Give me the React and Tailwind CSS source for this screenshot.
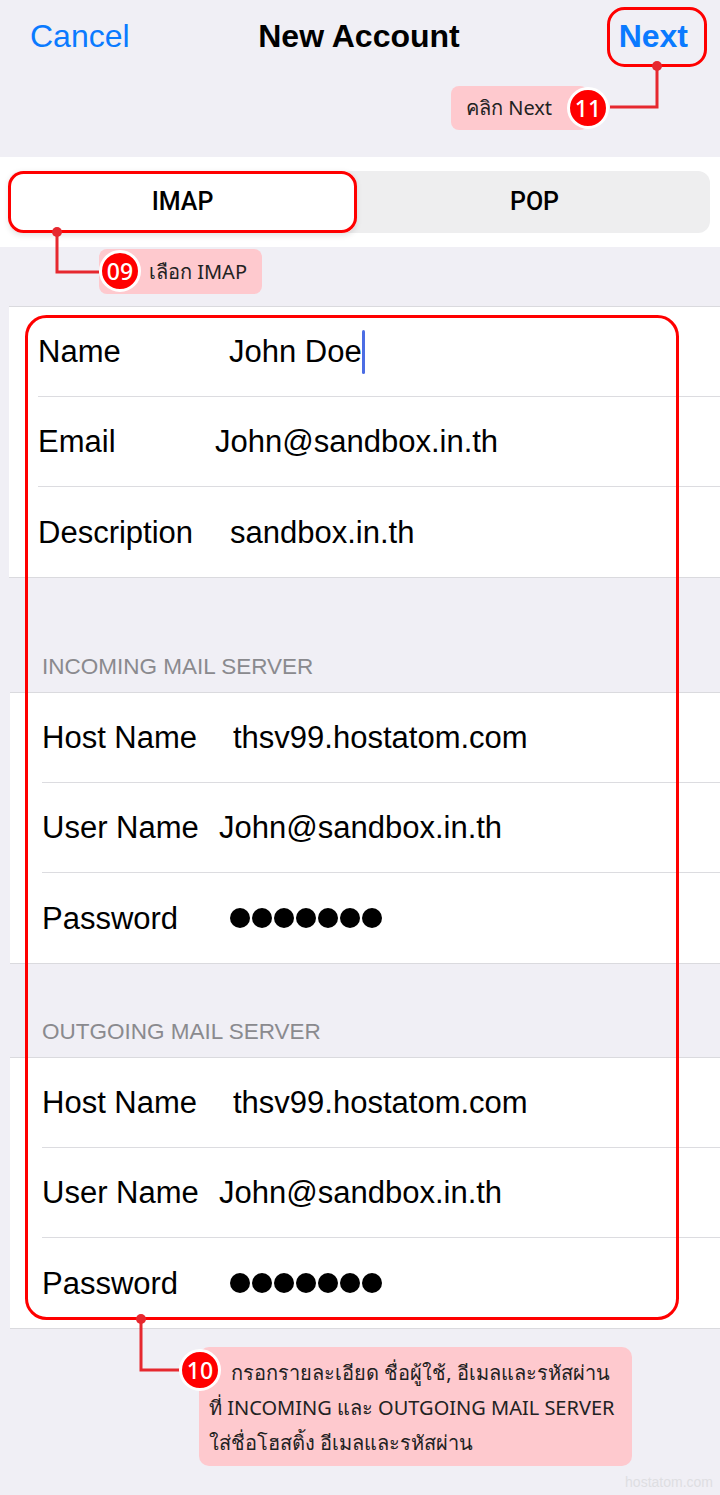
import React from 'react';

const RED = '#ff0000';
const LINE = '#e6282f';

const sectionOne = [
  { label: 'Name', value: 'John Doe', w: 'w-[191px]', caret: true },
  { label: 'Email', value: 'John@sandbox.in.th', w: 'w-[177px]' },
  { label: 'Description', value: 'sandbox.in.th', w: 'w-[192px]' },
];

const serverRows = [
  { label: 'Host Name', value: 'thsv99.hostatom.com', w: 'w-[191px]' },
  { label: 'User Name', value: 'John@sandbox.in.th', w: 'w-[177px]' },
  { label: 'Password', dots: 7, w: 'w-[188px]' },
];

const Dots = ({ count }) => (
  <div className="flex items-center gap-[2px]">
    {Array.from({ length: count }).map((_, i) => (
      <div key={i} className="w-[20px] h-[20px] rounded-full bg-black" />
    ))}
  </div>
);

const Row = ({ row, last, inset }) => (
  <div className={`h-[90px] flex ${inset}`}>
    <div className={`flex-1 flex items-center ${last ? '' : 'border-b border-[#dcdce0]'}`}>
      <div className={`${row.w} shrink-0 text-[31px] leading-none text-black`}>{row.label}</div>
      {row.dots ? (
        <Dots count={row.dots} />
      ) : (
        <div className="flex items-center text-[31px] leading-none text-black">
          <span>{row.value}</span>
          {row.caret && <span className="inline-block w-[3px] h-[44px] bg-[#4c6de4] rounded-full" />}
        </div>
      )}
    </div>
  </div>
);

const Section = ({ rows, margin, inset }) => (
  <div className={`${margin} bg-white border-y border-[#dadade]`}>
    {rows.map((row, idx) => (
      <Row key={row.label} row={row} inset={inset} last={idx === rows.length - 1} />
    ))}
  </div>
);

const Badge = ({ label, className }) => (
  <div
    className={`absolute w-[42px] h-[42px] rounded-full bg-[#ff0000] border-[3px] border-white flex items-center justify-center text-white text-[23px] font-['Noto_Sans',sans-serif] font-medium z-30 ${className}`}
  >
    {label}
  </div>
);

const thai = "font-['Noto_Sans','DejaVu_Sans',sans-serif]";

const App = () => {
  return (
    <div className="relative w-[720px] min-h-[1495px] bg-[#f0eff5] font-['Liberation_Sans',Arial,sans-serif] overflow-hidden">
      {/* nav bar */}
      <div className="h-[157px] pt-[16px]">
        <div className="grid grid-cols-3 pl-[30px] pr-[32px] text-[32px] leading-[40px]">
          <div className="text-[#0a7aff]">Cancel</div>
          <div className="text-center font-semibold text-black whitespace-nowrap">New Account</div>
          <div className="text-right font-semibold text-[#0a7aff]">Next</div>
        </div>
      </div>

      {/* segmented control */}
      <div className="h-[90px] bg-white pt-[14px] pl-[9px] pr-[10px]">
        <div className="h-[62px] flex rounded-[12px] bg-[#eeeeef] font-['Roboto',sans-serif] font-medium text-[25px] text-black">
          <div className="w-[347px] h-full rounded-[13px] bg-white shadow-[0_2px_6px_rgba(0,0,0,0.12)] flex items-center justify-center">
            IMAP
          </div>
          <div className="flex-1 flex items-center justify-center pl-[3px]">POP</div>
        </div>
      </div>

      <div className="h-[59px]" />

      <Section rows={sectionOne} margin="ml-[9px]" inset="pl-[29px]" />

      <div className="h-[114px] flex items-end pb-[13px] pl-[42px]">
        <div className="text-[22.5px] leading-[24px] text-[#8a8a8e]">INCOMING MAIL SERVER</div>
      </div>

      <Section rows={serverRows} margin="ml-[10px]" inset="pl-[32px]" />

      <div className="h-[93px] flex items-end pb-[13px] pl-[42px]">
        <div className="text-[22.5px] leading-[24px] text-[#8a8a8e]">OUTGOING MAIL SERVER</div>
      </div>

      <Section rows={serverRows} margin="ml-[10px]" inset="pl-[32px]" />

      <div className="flex justify-end pt-[143px] pr-[7px] pb-[3px]">
        <div className="text-[14px] leading-[20px] text-[#dedee2]">hostatom.com</div>
      </div>

      {/* annotation strokes */}
      <svg className="absolute inset-0 z-10 pointer-events-none" width="720" height="1495" viewBox="0 0 720 1495">
        <rect x="608.5" y="8.5" width="97" height="57" rx="16" fill="none" stroke={RED} strokeWidth="3" />
        <rect x="9.5" y="172.5" width="346" height="59" rx="14" fill="none" stroke={RED} strokeWidth="3" />
        <rect x="26.5" y="316.5" width="651" height="1002" rx="20" fill="none" stroke={RED} strokeWidth="3" />
        <path d="M657 66 V107 H610" fill="none" stroke={LINE} strokeWidth="3" />
        <path d="M57 232 V272 H102" fill="none" stroke={LINE} strokeWidth="3" />
        <path d="M141 1319 V1370 H182" fill="none" stroke={LINE} strokeWidth="3" />
        <circle cx="657" cy="66" r="5" fill={LINE} />
        <circle cx="57" cy="232" r="5" fill={LINE} />
        <circle cx="141" cy="1319" r="5" fill={LINE} />
      </svg>

      {/* callout labels */}
      <div className={`absolute left-[451px] top-[86px] w-[137px] h-[44px] rounded-[8px] bg-[#fec9ce] pl-[15px] text-[20px] leading-[44px] text-[#222] z-20 whitespace-nowrap ${thai}`}>
        คลิก Next
      </div>
      <Badge label="11" className="left-[567px] top-[87px]" />

      <div className={`absolute left-[99px] top-[249px] w-[163px] h-[45px] rounded-[8px] bg-[#fec9ce] pl-[50px] text-[20px] leading-[45px] text-[#222] z-20 whitespace-nowrap ${thai}`}>
        เลือก IMAP
      </div>
      <Badge label="09" className="left-[99px] top-[250px]" />

      <div className={`absolute left-[199px] top-[1347px] w-[433px] h-[119px] rounded-[10px] bg-[#fec9ce] pt-[8px] text-[20px] leading-[35px] text-[#222] z-20 whitespace-nowrap ${thai}`}>
        <div className="pl-[32px]">กรอกรายละเอียด ชื่อผู้ใช้, อีเมลและรหัสผ่าน</div>
        <div className="pl-[10px]">ที่ INCOMING และ OUTGOING MAIL SERVER</div>
        <div className="pl-[10px]">ใส่ชื่อโฮสติ้ง อีเมลและรหัสผ่าน</div>
      </div>
      <Badge label="10" className="left-[179px] top-[1349px]" />
    </div>
  );
};

export default App;
